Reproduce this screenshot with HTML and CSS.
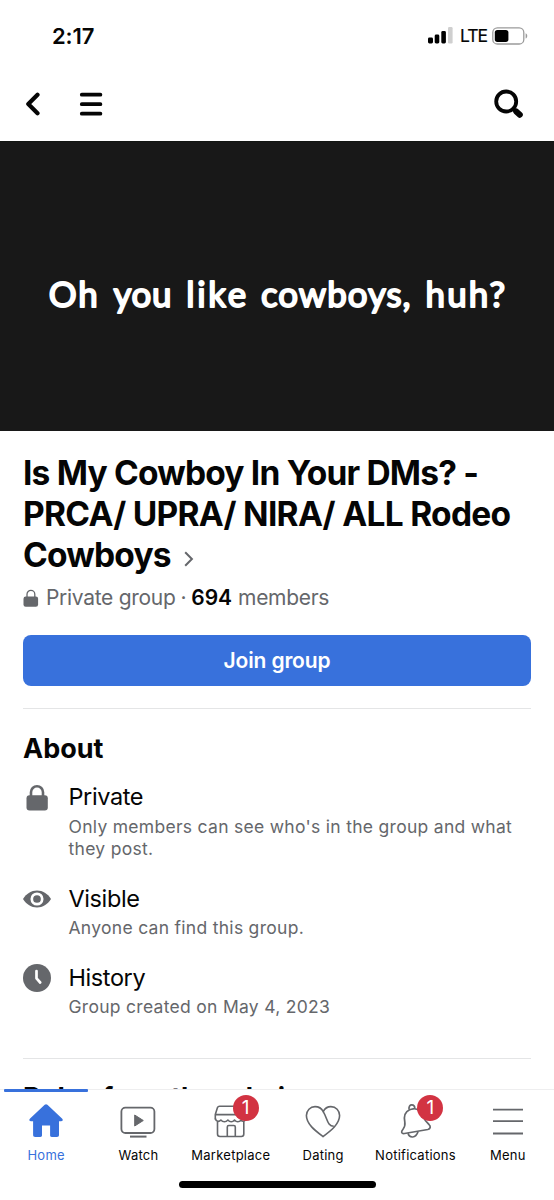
FILE: index.html
```html
<!DOCTYPE html>
<html lang="en">
<head>
<meta charset="utf-8">
<title>Group</title>
<link rel="stylesheet" href="styles.css">
</head>
<body>
<div class="app">
  <header class="top">
    <div class="status">
      <span class="time">2:17</span>
      <div class="status-right">
        <svg class="signal" width="25" height="17" viewBox="0 0 25 17"><rect x="0" y="10.5" width="5" height="6" rx="1.4"/><rect x="6.7" y="7.5" width="4.6" height="9" rx="1.4"/><rect x="13.3" y="4" width="4.6" height="12.5" rx="1.4"/><rect x="20" y="0" width="4.6" height="16.5" rx="1.2" fill="#cfcfcf"/></svg>
        <span class="lte">LTE</span>
        <svg class="battery" width="36" height="18" viewBox="0 0 36 18"><rect x=".8" y=".8" width="31" height="16.2" rx="4.6" fill="none" stroke="#9b9b9b" stroke-width="1.3"/><rect x="2.8" y="2.9" width="13.6" height="12" rx="2.6"/><path d="M33.6 6.2c2.2.8 2.2 4.6 0 5.4z" fill="#9b9b9b"/></svg>
      </div>
    </div>
    <div class="toolbar">
      <svg class="back" width="16" height="24" viewBox="0 0 16 24"><path d="M12.5 2.7 3.3 12l9.2 9.3" fill="none" stroke="#050505" stroke-width="4.2" stroke-linecap="round" stroke-linejoin="round"/></svg>
      <svg class="burger" width="24" height="24" viewBox="0 0 24 24"><path d="M2.8 2.7h18.6M2.8 12.2h18.6M2.8 21.7h18.6" stroke="#050505" stroke-width="3.8" stroke-linecap="round"/></svg>
      <svg class="search" width="30" height="30" viewBox="0 0 30 30"><circle cx="12.2" cy="12.5" r="10" fill="none" stroke="#050505" stroke-width="3.8"/><path d="m19.3 20 2.2 2" stroke="#050505" stroke-width="3.6"/><path d="m22.2 22.5 3.6 3.3" stroke="#050505" stroke-width="6" stroke-linecap="round"/></svg>
    </div>
  </header>
  <main class="page">
    <svg class="cover" width="554" height="290" viewBox="0 0 554 290">
      <g class="cover-text">
        <text x="48" y="165.500" textLength="49">Oh</text>
        <text x="113" y="165.500" textLength="58">you</text>
        <text x="186" y="165.500" textLength="60">like</text>
        <text x="261" y="165.500" textLength="150">cowboys,</text>
        <text x="426" y="165.500" textLength="80">huh?</text>
      </g>
    </svg>
    <div class="content">
      <h1 class="title"><span class="l1">Is My Cowboy In Your DMs? -</span><br><span class="l2">PRCA/ UPRA/ NIRA/ ALL Rodeo</span><br><span class="l3">Cowboys</span><svg class="chev" width="10" height="16" viewBox="0 0 10 16"><path d="m1.2 1.3 6.700 6.700-6.700 6.700" fill="none" stroke="#65676b" stroke-width="2"/></svg></h1>
      <div class="meta">
        <svg width="16" height="19" viewBox="0 0 16 19"><path d="M4 9V5.2a3.8 3.8 0 0 1 7.8 0V9" fill="none" stroke="#65676b" stroke-width="1.3"/><rect x=".5" y="7.5" width="14.6" height="10.3" rx="2.2" fill="#65676b"/></svg>
        <span class="kind">Private group</span><span class="dot">·</span><b>694</b><span class="members">members</span>
      </div>
      <button class="join">Join group</button>
      <section class="about">
        <h2>About</h2>
        <div class="row">
          <svg width="28" height="30" viewBox="0 0 28 30"><path d="M8 14V9.2a6 6 0 0 1 12 0V14" fill="none" stroke="#65676b" stroke-width="2.6"/><rect x="3.5" y="12.2" width="21.3" height="15.4" rx="3" fill="#65676b"/></svg>
          <div><h3>Private</h3><p>Only members can see who's in the group and what<br>they post.</p></div>
        </div>
        <div class="row">
          <svg width="28" height="30" viewBox="0 0 28 30"><path d="M0 14C3.5 8.500 8.300 5.500 14 5.500S24.500 8.500 28 14c-3.500 5.500-8.300 8.500-14 8.500S3.500 19.500 0 14z" fill="#65676b"/><circle cx="14" cy="14" r="5.2" fill="#65676b" stroke="#fff" stroke-width="2.7"/></svg>
          <div><h3>Visible</h3><p>Anyone can find this group.</p></div>
        </div>
        <div class="row">
          <svg width="28" height="30" viewBox="0 0 28 30"><circle cx="14" cy="14" r="14" fill="#65676b"/><path d="M13.500 7v7.300l3.700 4.200" fill="none" stroke="#fff" stroke-width="2.700" stroke-linecap="round" stroke-linejoin="round"/></svg>
          <div><h3>History</h3><p>Group created on May 4, 2023</p></div>
        </div>
      </section>
      <section class="rules"><h2>Rules from the admins</h2></section>
    </div>
  </main>
  <nav class="tabs">
    <a class="tab active"><svg width="36" height="36" viewBox="0 0 36 36"><path d="M16.700.800a2 2 0 0 1 2.700 0L34 14.500c1.300 1.300.900 2.700-.800 2.700h-2.200v13.600c0 1.600-.600 2.200-2.200 2.200h-5c-1.200 0-1.700-.600-1.700-1.700v-9.700h-8.100v9.700c0 1.100-.500 1.700-1.700 1.700h-5c-1.600 0-2.200-.600-2.200-2.200V17.200H2.900c-1.700 0-2.100-1.400-.800-2.700z" fill="#3871dc"/></svg><span>Home</span></a>
    <a class="tab"><svg width="36" height="36" viewBox="0 0 36 36" fill="none" stroke="#65676b" stroke-width="1.800"><rect x="1.400" y="3.600" width="33" height="25.400" rx="4"/><path d="M10 32.600h16.500" stroke-width="2"/><path d="M14.700 11v11l8.600-5.500z" fill="#65676b" stroke-width="1" stroke-linejoin="round"/></svg><span>Watch</span></a>
    <a class="tab"><svg width="36" height="36" viewBox="0 0 36 36" fill="none" stroke="#65676b" stroke-width="1.600" stroke-linejoin="round"><path d="M2.300 15.500v-5l2.200-7q.500-1.200 2-1.200h22l4.200 8.200v5M2.300 10.600h30"/><path d="M2.300 14.500c.8 3.500 3.800 3.500 5.600 1.500 2 2.400 5 2.400 7 0 2 2.400 4.700 2.400 6.600 0 2 2.400 4.700 2.400 6.600 0 1.700 2.200 4 1.500 4.600-1.500M4.500 17.500v12.500q0 2.500 2.500 2.500h21.300q2.500 0 2.500-2.500V17.500M14.300 32.500V23q0-1.500 1.500-1.500h5q1.500 0 1.500 1.500v9.500"/></svg><span class="badge">1</span><span>Marketplace</span></a>
    <a class="tab"><svg width="36" height="36" viewBox="0 0 36 36" fill="none" stroke="#65676b" stroke-width="1.600" stroke-linejoin="round"><path d="M18 32.600C10 26.500 1.400 20 1.400 11.600 1.400 6.500 5.300 2.600 10 2.600c3.600 0 6.600 1.800 8.200 5 1.600-3.200 4.400-5 7.700-5 5 0 8.700 3.900 8.700 9 0 8.400-8.600 15-16.600 21z"/><path d="M18.200 7.600c4.300 6.800 4 14.700 10.600 14.700"/></svg><span>Dating</span></a>
    <a class="tab bell"><svg width="36" height="36" viewBox="0 0 36 36" fill="none" stroke="#65676b" stroke-width="1.700" stroke-linejoin="round"><path d="M9.600 5.800C4.800 8 3.800 13 4.800 18c.6 3.500-.3 5.300-1.800 7.200-2.400 2.700-1.500 4.700 1.500 4.300l23.300-4c2.700-.6 3.200-3 1.200-5-2.500-2.200-4.300-4-6-8C20.700 7 17.200 4.400 13.300 4.800q-2 .2-3.700 1z"/><path d="M9 5.500C8.700 2 10 .9 11.800.9c2 0 3 1.400 3 3.800M8 29.300c1.400 5 7.700 5.300 10-1.500"/></svg><span class="badge">1</span><span>Notifications</span></a>
    <a class="tab"><svg width="36" height="36" viewBox="0 0 36 36"><path d="M3 5.700h30M3 17.200h30M3 29.500h30" stroke="#65676b" stroke-width="1.800"/></svg><span>Menu</span></a>
    <div class="home-bar"></div>
  </nav>
</div>
</body>
</html>
```
FILE: styles.css
```css
* { box-sizing: border-box; }
body { margin: 0; background: #fff; color: #050505; font-family: Inter, "Liberation Sans", sans-serif; }
h1, h2, h3, p { margin: 0; font-weight: 400; }
svg { display: block; flex: none; }
.app { display: flex; flex-direction: column; width: 554px; height: 1200px; overflow: hidden; }

.top { flex: none; height: 141px; }
.status { display: flex; align-items: center; justify-content: space-between; height: 71px; padding: 0 26px 0 52px; }
.time { font-size: 22px; font-weight: 600; line-height: 26px; letter-spacing: -.1px; }
.status-right { display: flex; align-items: center; }
.lte { width: 26px; margin: 0 6px 0 7px; font-size: 17.5px; font-weight: 400; line-height: 22px; letter-spacing: -1px; -webkit-text-stroke: .2px; }
.toolbar { display: flex; align-items: center; height: 65px; padding: 0 30px 0 25px; }
.burger { margin-left: 38px; }
.search { margin-left: auto; }

.page { flex: 1; min-height: 0; overflow: hidden; }
.cover { background: #181818; border-top: 1px solid #121512; }
.cover-text { font-family: Lato, sans-serif; font-size: 35px; fill: #fff; stroke: #fff; stroke-width: 1.9px; stroke-linejoin: round; }
.content { padding: 22px 23px 0; }

.title { font-size: 33.5px; font-weight: 700; line-height: 41px; white-space: nowrap; }
.l1, .l3 { letter-spacing: -.8px; }
.l2 { letter-spacing: -.7px; }
.chev { display: inline-block; margin-left: 13px; vertical-align: 0; }
.meta { display: flex; align-items: center; height: 26px; margin-top: 9px; font-size: 21px; line-height: 26px; letter-spacing: -.3px; color: #65676b; white-space: nowrap; }
.kind { margin-left: 7px; }
.dot { margin: 0 5px; }
.meta b { color: #050505; font-weight: 600; letter-spacing: 0; }
.members { margin-left: 6px; }
.join { display: block; width: 100%; height: 51px; margin-top: 24px; padding: 0; border: 0; border-radius: 8px; background: #3871dc; color: #fff; font: 600 21px/51px Inter, sans-serif; letter-spacing: -.15px; }

.about { margin-top: 22px; padding: 23px 0 39px; border-top: 1px solid #e4e5e6; }
h2 { font-size: 27px; font-weight: 700; line-height: 34px; }
.row { display: flex; gap: 17.5px; margin-top: 24px; }
.about h2 + .row { margin-top: 17px; }
.row h3 { font-size: 23.5px; line-height: 28px; margin-bottom: 4.5px; letter-spacing: -.4px; }
.row p { font-size: 17.5px; line-height: 22.5px; letter-spacing: .29px; color: #65676b; white-space: nowrap; }
.rules { padding-top: 22px; border-top: 1px solid #e4e5e6; }

.tabs { position: relative; display: grid; grid-template-columns: repeat(6, 1fr); flex: none; height: 111px; border-top: 1px solid #eeeeef; background: #fff; }
.tab { position: relative; display: flex; flex-direction: column; align-items: center; gap: 6px; padding-top: 14px; font-size: 13px; line-height: 18px; letter-spacing: .25px; }
.bell svg { margin-left: 6px; }
.active { color: #3871dc; }
.active::before { content: ""; position: absolute; top: -1px; left: 4px; width: 84px; height: 3px; border-radius: 1px; background: #3871dc; }
.badge { position: absolute; top: 5px; left: 48px; width: 26px; height: 26px; border-radius: 50%; background: #d23342; color: #fff; font-size: 19px; line-height: 26px; letter-spacing: 0; text-align: center; }
.home-bar { position: absolute; left: 179px; bottom: 12px; width: 197px; height: 7px; border-radius: 4px; background: #000; }
```
